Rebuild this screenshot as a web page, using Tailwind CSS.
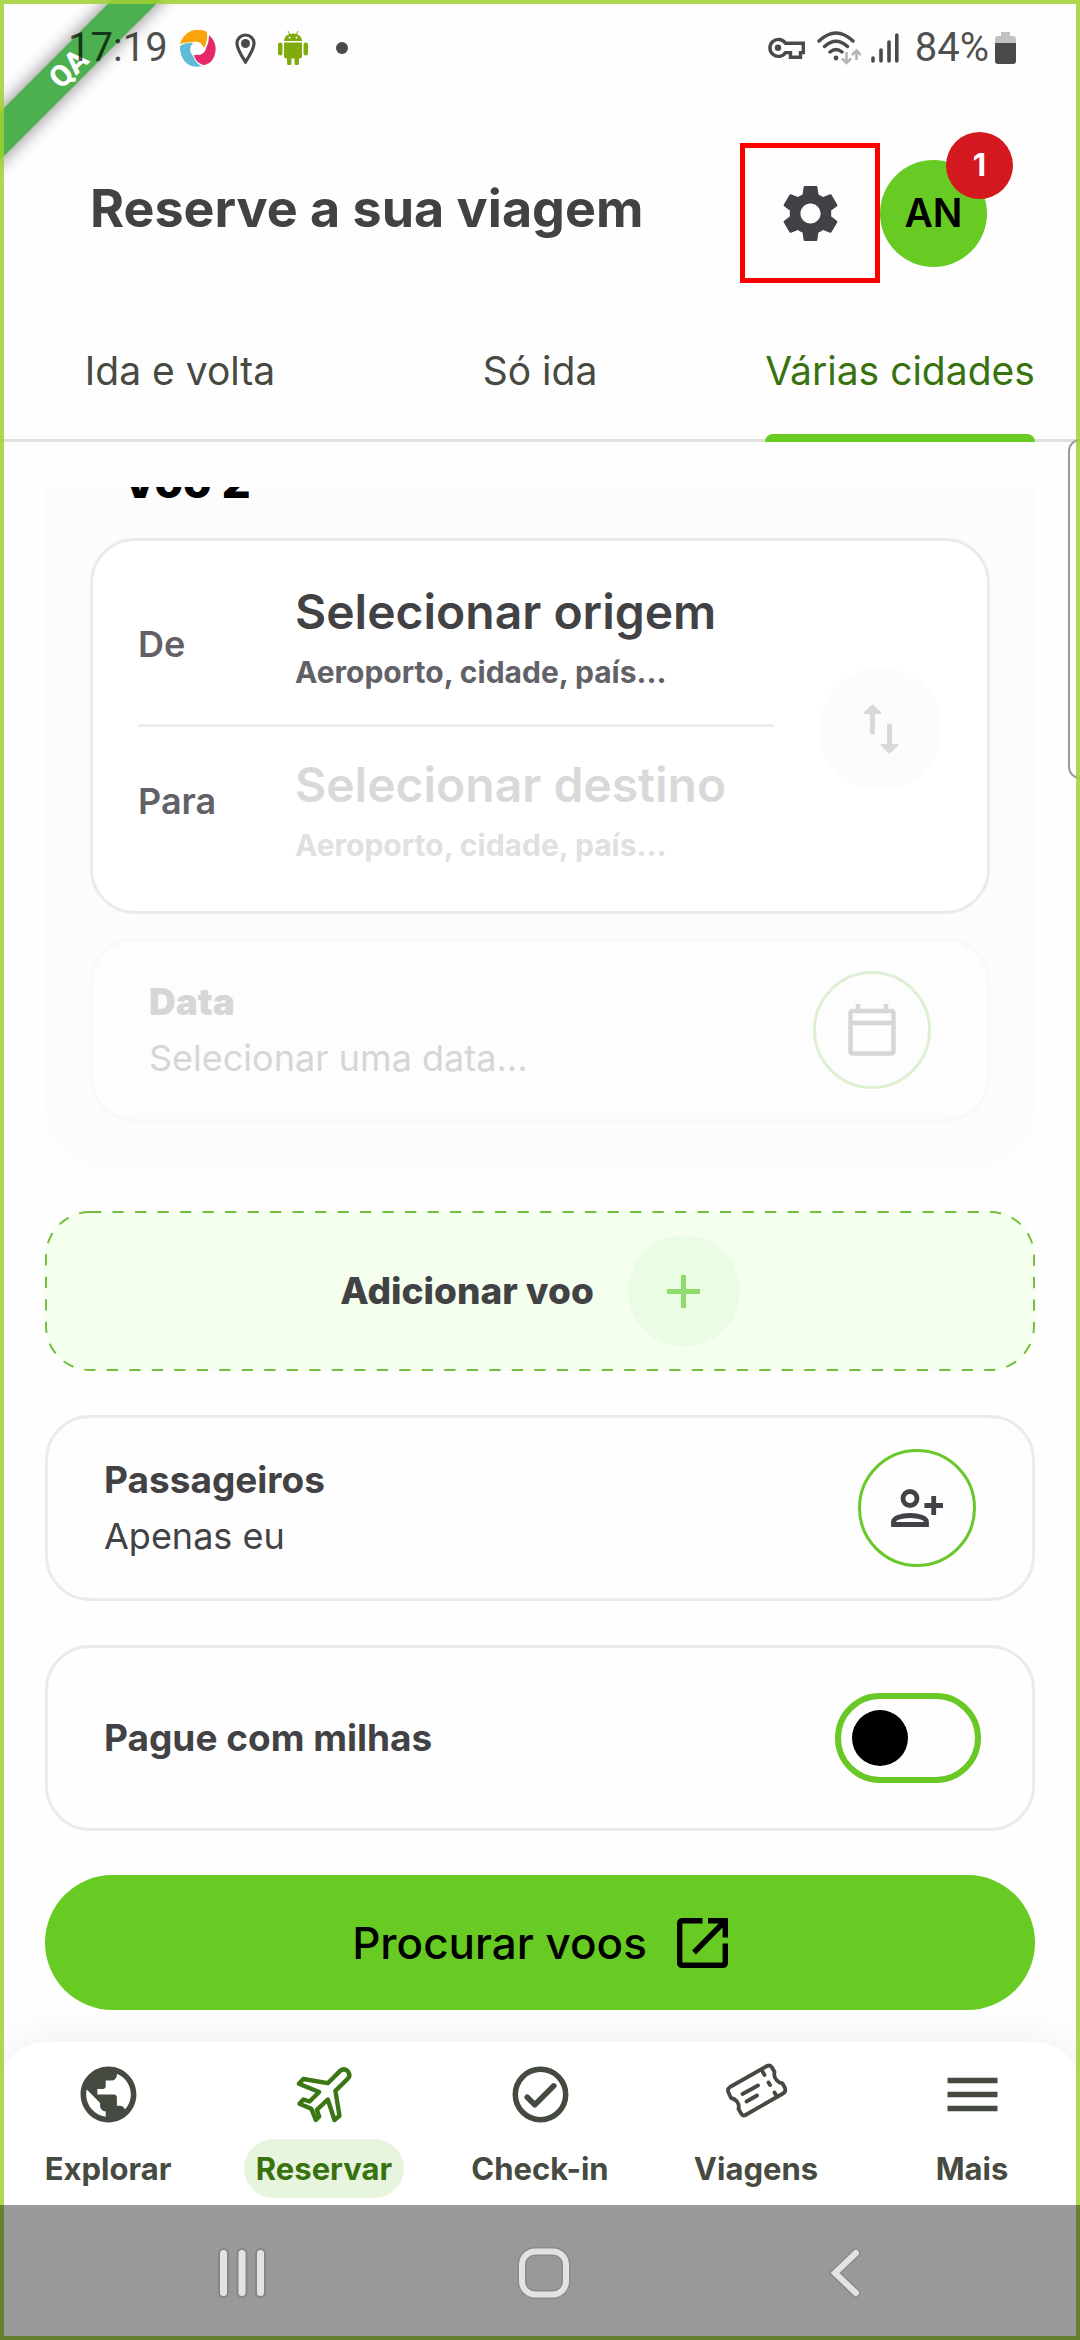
<!DOCTYPE html>
<html lang="pt">
<head>
<meta charset="utf-8">
<meta name="viewport" content="width=device-width, initial-scale=1">
<title>Reserve a sua viagem</title>
<script src="https://cdn.jsdelivr.net/npm/@tailwindcss/browser@4"></script>
</head>
<body class="relative flex min-h-screen flex-col overflow-x-hidden bg-[#fefefe] font-['Inter',sans-serif] text-[#424245]">

  <!-- Build ribbon -->
  <div class="pointer-events-none absolute top-0 left-0 size-64 overflow-hidden">
    <div class="absolute top-[51px] -left-[60px] flex h-[34px] w-64 -rotate-45 items-center justify-center bg-[#4caf50] font-['Roboto',sans-serif] text-[30px] font-extrabold text-white shadow-[0_0_18px_rgba(0,0,0,0.5)]">QA</div>
  </div>

  <!-- Status bar -->
  <div class="relative flex h-[94px] items-center justify-between pt-0.5 pr-16 pl-[68px] font-['Roboto',sans-serif] text-[40px] text-black/70">
    <div class="flex items-center">
      <span>17:19</span>
      <svg class="ml-3 h-[37px] w-9" viewBox="0 0 36 37">
        <path d="M0 14A18.500 18.500 0 0 1 27 2Q28 11 24 18Q20 10 13 12Q6 12 0 14Z" fill="#fba30a"/>
        <path d="M29 5Q39 14 34 27Q30 35 23 35Q15 32 14 25Q25 26 26 18Q29 13 29 5Z" fill="#e5276b"/>
        <path d="M0 16Q6 12 13 13Q7 19 13 26Q16 34 22 36Q9 39 3 29Q0 24 0 16Z" fill="#5dbdd6"/>
      </svg>
      <svg class="ml-[19px] h-[31px] w-[21px]" viewBox="0 0 21 31">
        <path d="M10.500 29C6 22 2 16 2 10.500a8.500 8.500 0 0 1 17 0C19 16 15 22 10.500 29Z" fill="none" stroke="#4a4a4a" stroke-width="3.200"/>
        <circle cx="10.500" cy="10.500" r="4.500" fill="#4a4a4a"/>
      </svg>
      <svg class="ml-[22px] h-[34px] w-[30px]" viewBox="0 0 30 34" fill="#7fab0c">
        <path d="M6 10C6 5.500 10 2.500 15 2.500S24 5.500 24 10Z"/>
        <path d="M10 0l2 4M20 0l-2 4" stroke="#7fab0c" stroke-width="1"/>
        <path d="M6 11.500H24V25a2.500 2.500 0 0 1-2.500 2.500H21V32a2 2 0 0 1-4.500 0V27.500H13.500V32a2 2 0 0 1-4.500 0V27.500H8.500A2.500 2.500 0 0 1 6 25Z"/>
        <rect x="0" y="11.500" width="4.500" height="13" rx="2.200"/><rect x="25.500" y="11.500" width="4.500" height="13" rx="2.200"/>
        <circle cx="11.500" cy="6.500" r="1" fill="#fff"/><circle cx="18.500" cy="6.500" r="1" fill="#fff"/>
      </svg>
      <span class="ml-7 size-3 rounded-full bg-[#4a4a4a]"></span>
    </div>
    <div class="flex items-center">
      <svg class="mr-3 h-[22px] w-[37px]" viewBox="0 0 37 22" fill="none" stroke="#4a4a4a" stroke-width="3.400">
        <path d="M17.500 6.200A8.500 8.500 0 1 0 17.500 15.600H22.500V20.300H32.500V15.600H35.300V6.200Z"/>
        <circle cx="10" cy="10.800" r="3.200" fill="#4a4a4a" stroke="none"/>
      </svg>
      <svg class="mr-2.5 h-[34px] w-11" viewBox="0 0 44 34" fill="none" stroke="#4a4a4a" stroke-width="3.400" stroke-linecap="round">
        <path d="M2 10Q19 -6 36 10M7.500 15.500Q19 5 30.500 15.500M13 21Q19 16 25 21"/>
        <circle cx="19" cy="27" r="2.400" fill="#4a4a4a" stroke="none"/>
        <g stroke="#b5b5b5" stroke-width="2.600" stroke-linecap="butt"><path d="M29.500 21V31M25 27.500L29.500 32L34 27.500M39.500 29V20M35 24L39.500 19.500L44 24"/></g>
      </svg>
      <svg class="mr-4 h-[30px] w-7" viewBox="0 0 28 30" stroke="#4a4a4a" stroke-width="3.600" stroke-linecap="round">
        <path d="M2 25V28M10 17V28M18 9V28M25.800 2V28"/>
      </svg>
      <span>84%</span>
      <svg class="ml-1.5 h-8 w-[21px]" viewBox="0 0 21 32">
        <path d="M6 0H15V4H18a3 3 0 0 1 3 3V12H0V7A3 3 0 0 1 3 4H6Z" fill="#c2c2c2"/>
        <path d="M0 11H21V29a3 3 0 0 1-3 3H3A3 3 0 0 1 0 29Z" fill="#4a4a4a"/>
      </svg>
    </div>
  </div>

  <!-- Header -->
  <header class="flex items-center pt-[49px] pr-[93px] pl-[90px]">
    <h1 class="flex-1 pb-2 text-[52px] leading-[60px] font-bold">Reserve a sua viagem</h1>
    <button type="button" aria-label="Definições" class="flex size-[140px] items-center justify-center border-[5px] border-[#fe0000]">
      <svg class="size-[69px]" viewBox="0 0 24 24" fill="#424147"><path d="M19.140 12.940c.04-.3.06-.61.06-.94 0-.32-.02-.64-.07-.94l2.030-1.580c.18-.14.23-.41.12-.61l-1.920-3.320c-.12-.22-.37-.29-.59-.22l-2.390.96c-.5-.38-1.030-.7-1.620-.94l-.36-2.540c-.04-.24-.24-.41-.48-.41h-3.840c-.24 0-.43.17-.47.41l-.36 2.540c-.59.24-1.130.57-1.620.94l-2.390-.96c-.22-.08-.47 0-.59.22L2.740 8.870c-.12.21-.08.47.12.61l2.030 1.580c-.05.3-.09.63-.09.94s.02.64.07.94l-2.030 1.580c-.18.14-.23.41-.12.61l1.920 3.320c.12.22.37.29.59.22l2.390-.96c.5.38 1.030.7 1.620.94l.36 2.540c.05.24.24.41.48.41h3.840c.24 0 .44-.17.47-.41l.36-2.540c.59-.24 1.130-.56 1.620-.94l2.390.96c.22.08.47 0 .59-.22l1.920-3.320c.12-.22.07-.47-.12-.61l-2.010-1.580zM12 15.500c-1.930 0-3.500-1.570-3.500-3.500s1.570-3.500 3.500-3.500 3.500 1.570 3.500 3.500-1.570 3.500-3.500 3.500z"/></svg>
    </button>
    <button type="button" class="relative flex size-[107px] items-center justify-center rounded-full bg-[#67cb23] text-[39px] font-semibold text-black">AN
      <span class="absolute -top-7 -right-[26px] flex size-[67px] items-center justify-center rounded-full bg-[#d4181f] text-[31px] font-bold text-white">1</span>
    </button>
  </header>

  <!-- Trip type -->
  <nav class="grid grid-cols-3 text-[39px] leading-[60px] text-[#464a41] shadow-[inset_0_-3px_0_#e1e1dc]">
    <a href="#" class="flex justify-center pt-[58px] pb-[41px]">Ida e volta</a>
    <a href="#" class="flex justify-center pt-[58px] pb-[41px]">Só ida</a>
    <a href="#" aria-current="page" class="flex flex-col items-center text-[#37720f]">
      <span class="pt-[58px] pb-[33px] after:relative after:top-[33px] after:block after:h-2 after:rounded-t-lg after:bg-[#67cb23] after:content-['']">Várias cidades</span>
    </a>
  </nav>

  <main class="flex flex-1 flex-col gap-11 px-[45px] pt-[45px] pb-8">

    <!-- Flight 2, partly scrolled away -->
    <section class="overflow-hidden rounded-b-[60px] bg-[#fcfcfc] px-[45px] pb-[45px]">
      <h2 class="-mt-9 mb-[27px] pl-8 text-[46px] leading-[60px] font-extrabold text-black">Voo 2</h2>
      <div class="mb-6 flex items-center gap-[45px] rounded-[45px] border-[3px] border-[#ebebeb] bg-white px-[45px] pt-[41px] pb-9">
        <div class="flex-1">
          <button type="button" class="flex w-full items-start text-left leading-[60px]">
            <span class="w-[157px] pt-8 text-[36px] font-semibold text-[#626167]">De</span>
            <span class="flex-1">
              <span class="block text-[48px] font-semibold text-[#424245]">Selecionar origem</span>
              <span class="block text-[30px] font-bold text-[#626167]">Aeroporto, cidade, país...</span>
            </span>
          </button>
          <hr class="mt-[22px] mb-7 h-[3px] border-0 bg-[#ededed]">
          <button type="button" class="flex w-full items-start text-left leading-[60px]">
            <span class="w-[157px] pt-4 text-[36px] font-semibold text-[#626167]">Para</span>
            <span class="flex-1">
              <span class="block text-[48px] font-semibold text-[#d9d9d9]">Selecionar destino</span>
              <span class="block text-[30px] font-bold text-[#e0e0e0]">Aeroporto, cidade, país...</span>
            </span>
          </button>
        </div>
        <button type="button" disabled aria-label="Trocar" class="flex size-[123px] items-center justify-center rounded-full bg-[#fcfcfc]">
          <svg class="h-[50px] w-9" viewBox="0 0 36 50" fill="#d9d9d9" stroke="#d9d9d9" stroke-linecap="round" stroke-linejoin="round">
            <path d="M9.500 8V28M26.500 22V42" stroke-width="5"/>
            <path d="M9.500 1.500L17.500 9H1.500ZM26.500 48.500L34.500 41H18.500Z" stroke-width="2"/>
          </svg>
        </button>
      </div>
      <button type="button" disabled class="flex w-full items-center justify-between rounded-[45px] border-[3px] border-[#f8f8f8] bg-[#fdfdfd] px-14 py-[30px] text-left leading-[56px] text-[#d6d6d6]">
        <span>
          <span class="block text-[37px] font-black">Data</span>
          <span class="block text-[36px]">Selecionar uma data...</span>
        </span>
        <span class="flex size-[118px] items-center justify-center rounded-full border-[3px] border-[#def0d3]">
          <svg class="h-[52px] w-12" viewBox="0 0 48 52" fill="none" stroke="#d6d6d6" stroke-width="4.500">
            <rect x="2.500" y="7" width="43" height="42.500" rx="2"/><path d="M2 19H46M10 0V7M38 0V7"/>
          </svg>
        </span>
      </button>
    </section>

    <button type="button" class="relative flex h-40 items-center justify-center gap-[34px] rounded-[45px] bg-[#f4ffee] text-[37px] font-extrabold text-[#424245]">
      <svg class="absolute inset-0 size-full" fill="none" stroke="#74bf40" stroke-width="2" stroke-dasharray="11.250">
        <rect x="1" y="1" rx="44" class="h-[calc(100%-2px)] w-[calc(100%-2px)]"/>
      </svg>
      <span>Adicionar voo</span>
      <span class="flex size-28 items-center justify-center rounded-full bg-[#ebfce4]">
        <svg class="size-[33px]" viewBox="0 0 33 33" stroke="#90db6c" stroke-width="5"><path d="M16.500 0V33M0 16.500H33"/></svg>
      </span>
    </button>

    <button type="button" class="flex items-center justify-between rounded-[45px] border-[3px] border-[#ebebeb] px-14 py-[31px] text-left leading-[56px]">
      <span>
        <span class="block text-[37px] font-bold">Passageiros</span>
        <span class="block text-[36px]">Apenas eu</span>
      </span>
      <span class="flex size-[118px] items-center justify-center rounded-full border-[3px] border-[#69c82c]">
        <svg class="h-[38px] w-[52px]" viewBox="0 0 52 38" fill="none" stroke="#424147" stroke-width="4.800">
          <circle cx="19" cy="9.500" r="7"/>
          <path d="M2.500 35.500V33C2.500 29 10 26.500 19 26.500S35.500 29 35.500 33V35.500Z"/>
          <path d="M42.700 7V26M33.400 16.500H52"/>
        </svg>
      </span>
    </button>

    <label class="flex items-center justify-between rounded-[45px] border-[3px] border-[#ebebeb] py-[45px] pr-[51px] pl-14 text-[37px] font-bold">
      Pague com milhas
      <input type="checkbox" role="switch" class="flex h-[90px] w-[146px] appearance-none items-center rounded-full border-[6px] border-[#69c825] px-[11px] before:size-14 before:rounded-full before:bg-black before:content-['']">
    </label>

    <button type="button" class="flex h-[135px] items-center justify-center gap-[30px] rounded-full bg-[#67cb23] text-[44px] font-medium text-black">
      Procurar voos
      <svg class="h-[50px] w-[51px]" viewBox="0 0 51 50" fill="none" stroke="#000" stroke-width="5.400">
        <path d="M25.500 2.700H5.500Q2.700 2.700 2.700 5.500V44.500Q2.700 47.300 5.500 47.300H45.500Q48.300 47.300 48.300 44.500V25.500M31 2.700H48.300V19.500M17 34.500L47 4"/>
      </svg>
    </button>
  </main>

  <!-- App navigation -->
  <nav class="grid h-[163px] grid-cols-5 rounded-t-[45px] bg-white text-[31px] leading-[59px] font-bold text-[#464a41] shadow-[0_-4px_40px_rgba(0,0,0,0.06)]">
    <a href="#" class="flex flex-col items-center gap-[11px] pt-[19px]">
      <svg class="size-[67px]" viewBox="0 0 24 24" fill="#444a3f"><path d="M12 2C6.480 2 2 6.480 2 12s4.480 10 10 10 10-4.480 10-10S17.520 2 12 2zm-1 17.930c-3.950-.49-7-3.850-7-7.930 0-.62.08-1.210.21-1.790L9 15v1c0 1.100.9 2 2 2v1.930zm6.900-2.540c-.26-.81-1-1.390-1.900-1.390h-1v-3c0-.55-.45-1-1-1H8v-2h2c.55 0 1-.45 1-1V7h2c1.100 0 2-.9 2-2v-.41c2.930 1.190 5 4.060 5 7.410 0 2.080-.8 3.970-2.100 5.390z"/></svg>
      <span>Explorar</span>
    </a>
    <a href="#" aria-current="page" class="flex flex-col items-center gap-[11px] pt-[19px] text-[#37720f]">
      <svg class="size-[67px]" viewBox="-6.500 -6.500 67 67" fill="none" stroke="#3a7613" stroke-width="4.400" stroke-linejoin="round"><path d="M42.400 3.600Q47 0 50.500 4Q53.500 8 50 11.500L37.900 23.300L42 48.300L37 52.500L30.300 32L19.300 42.300L21.700 49L18.300 52.500L13.800 41.300L2 36.300L5.900 32L12 34L21.700 24.500L1.400 16.300L5.900 11.500L30.300 15.700Z"/></svg>
      <span class="rounded-full bg-[#e7f5df] px-3">Reservar</span>
    </a>
    <a href="#" class="flex flex-col items-center gap-[11px] pt-[19px]">
      <svg class="size-[67px]" viewBox="-5.500 -5.500 67 67" fill="none" stroke="#444a3f" stroke-width="5.500" stroke-linecap="round" stroke-linejoin="round"><circle cx="28" cy="28" r="25.200"/><path d="M14.700 30.700L22.300 38.300L41.300 19.300"/></svg>
      <span>Check-in</span>
    </a>
    <a href="#" class="flex flex-col items-center gap-[11px] pt-[19px]">
      <svg class="size-[67px]" viewBox="-3 -3 67 67" fill="none" stroke="#444a3f" stroke-width="3.800" stroke-linecap="round" stroke-linejoin="round">
        <path d="M4 23L41 2Q44 0.500 46 3.500L48.500 8Q47.500 13 50.500 16Q53 19 56.500 19.500L59 24Q60 28 57 29.500L19.500 51Q17 52.500 15.500 50L12.500 45Q13.500 41 11 37.500Q8.500 34.500 5 34L2.500 28.500Q1 25 4 23Z"/>
        <path d="M16.500 30L32 21.500M20.500 37.500L31 31.500M36.500 7.500L38.500 11M42.500 18.500L44 21M48.500 28.500L50.500 32"/>
      </svg>
      <span>Viagens</span>
    </a>
    <a href="#" class="flex flex-col items-center gap-[11px] pt-[19px]">
      <svg class="size-[67px]" viewBox="0 0 67 67" stroke="#444a3f" stroke-width="5.500"><path d="M8.500 19.500H58.500M8.500 33.500H58.500M8.500 47.500H58.500"/></svg>
      <span>Mais</span>
    </a>
  </nav>

  <!-- System navigation -->
  <nav class="flex h-[135px] items-center justify-center gap-[250px] bg-[#999] pl-2">
    <button type="button" aria-label="Recentes">
      <svg class="h-[50px] w-[50px]" viewBox="0 0 50 50" fill="none" stroke-linecap="round"><path d="M6.500 5.500V44.500M25 5.500V44.500M43.500 5.500V44.500" stroke="#868686" stroke-width="11"/><path d="M6.500 5.500V44.500M25 5.500V44.500M43.500 5.500V44.500" stroke="#e3e3e3" stroke-width="7"/></svg>
    </button>
    <button type="button" aria-label="Início">
      <svg class="h-[54px] w-[54px]" viewBox="0 0 54 54" fill="none"><rect x="5" y="5.500" width="44" height="43" rx="13" stroke="#8a8a8a" stroke-width="9"/><rect x="5" y="5.500" width="44" height="43" rx="13" stroke="#e3e3e3" stroke-width="6"/></svg>
    </button>
    <button type="button" aria-label="Voltar">
      <svg class="h-[50px] w-[50px]" viewBox="0 0 50 50" fill="none" stroke-linecap="round"><path d="M35 5L14 25L35 45" stroke="#8a8a8a" stroke-width="9"/><path d="M35 5L14 25L35 45" stroke="#e3e3e3" stroke-width="6"/></svg>
    </button>
  </nav>

  <!-- Edge panel handle and window frame -->
  <div class="pointer-events-none absolute top-[439px] -right-1 h-[340px] w-4 rounded-l-xl border-2 border-[#9b9b9b] bg-white/60"></div>
  <div class="pointer-events-none absolute inset-0 border-4 border-[#9fd130]/85"></div>
  <div class="pointer-events-none absolute inset-x-0 bottom-0 h-[135px] border-4 border-t-0 border-[#67802f]"></div>
</body>
</html>
